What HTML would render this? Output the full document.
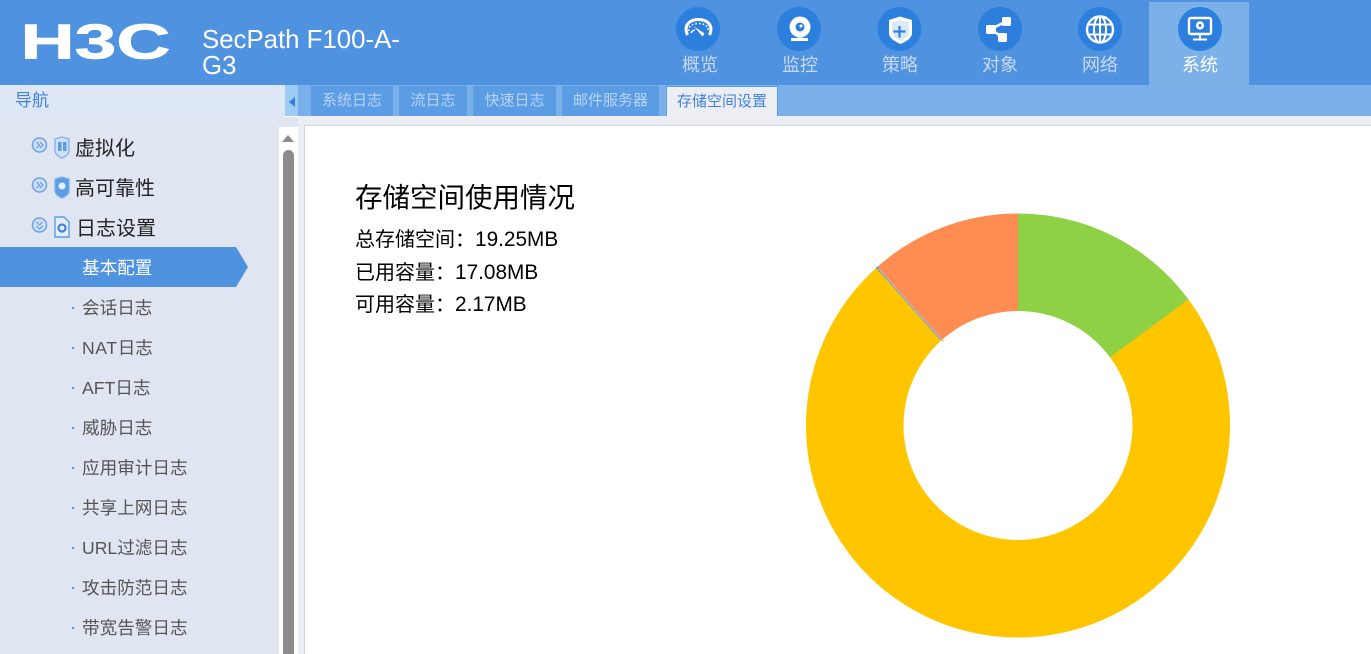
<!DOCTYPE html>
<html lang="zh-CN">
<head>
<meta charset="utf-8">
<title>存储空间设置</title>
<style>
html,body{margin:0;padding:0;width:1371px;height:654px;overflow:hidden;background:#fff;}
body{position:relative;font-family:"Liberation Sans","Noto Sans CJK SC",sans-serif;}
.a{position:absolute;white-space:nowrap;}
.bar{left:0;top:0;width:1371px;height:85px;background:#4f92e0;}
.sel{left:1149px;top:2px;width:100px;height:83px;background:#7bb0e9;}
.nl{top:53px;width:100px;text-align:center;font-size:18px;line-height:24px;color:#c9d9f3;}
.tab{top:86px;height:30px;background:#5b9de4;color:#b9d3f3;font-size:15px;line-height:30px;text-align:center;}
.sub{left:82px;font-size:17.6px;line-height:24px;color:#555;}
.dot{left:72px;width:2px;height:2px;background:#4f92e0;}
.top{font-size:20px;line-height:26px;color:#222;}
.info{left:355px;font-size:20px;line-height:26px;color:#000;}
.info span{font-size:20.800px;}
</style>
</head>
<body>
<div class="a bar"></div>
<svg class="a" style="left:0;top:0" width="200" height="85"><text x="20.500" y="58.500" font-family="Liberation Sans" font-weight="700" font-size="49" fill="#fff" stroke="#fff" stroke-width=".7" textLength="150" lengthAdjust="spacingAndGlyphs">H3C</text></svg>
<div class="a" style="left:202px;top:27px;font-size:25.800px;line-height:26px;color:#fff;white-space:normal;width:210px;">SecPath F100-A-G3</div>
<div class="a sel"></div>

<svg class="a" style="left:660px;top:0" width="600" height="60" fill="none">
  <g fill="#2d7fdd"><circle cx="38" cy="29" r="22"/><circle cx="139" cy="29" r="22"/><circle cx="239.500" cy="29" r="22"/><circle cx="340" cy="29" r="22"/><circle cx="440" cy="29" r="22"/><circle cx="540" cy="29" r="22"/></g>
  <!-- gauge -->
  <path d="M27.500 35C23 25 30 19.500 38.500 19.500S54 25 49.500 35" stroke="#fff" stroke-width="3"/>
  <path d="M29 31C28 26 33 23.500 38.500 23.500S49 26 48 31" stroke="#fff" stroke-width="1.600" stroke-dasharray="1.600 2"/>
  <path d="M34 26.500L44.500 33.500L42.500 36.500z" fill="#fff"/>
  <path d="M31 33c1-2 3-3 4-3" stroke="#fff" stroke-width="1.500"/>
  <!-- webcam -->
  <circle cx="140" cy="27" r="10.500" fill="#fff"/>
  <circle cx="140" cy="27" r="4.500" fill="#2d7fdd"/>
  <circle cx="141" cy="26" r="1.500" fill="#fff"/>
  <path d="M140 36v3" stroke="#fff" stroke-width="3"/>
  <rect x="131" y="38" width="17" height="3" fill="#fff"/>
  <!-- shield -->
  <path d="M229 20l11-3.500 12 3.500v13c0 5.500-7 9-11.500 11-4.500-2-11.500-5.500-11.500-11z" fill="#fff"/>
  <path d="M232 22.500l8.500-2.500 8.500 2.500v10c0 4-5.500 7-8.500 8.300-3-1.300-8.500-4.300-8.500-8.300z" fill="#dce9f9"/>
  <path d="M239.500 26v11.500M233.500 31.500h12" stroke="#2d7fdd" stroke-width="2.200"/>
  <!-- share -->
  <path d="M331 29l16-8M331 29l12 9" stroke="#fff" stroke-width="2.500"/>
  <rect x="326" y="25" width="10" height="9" rx="1.500" fill="#fff"/>
  <rect x="342" y="17" width="9" height="9" rx="1.500" fill="#fff"/>
  <rect x="338" y="33" width="9" height="9" rx="1.500" fill="#fff"/>
  <!-- globe -->
  <circle cx="440" cy="29.500" r="13" stroke="#fff" stroke-width="2.400"/>
  <ellipse cx="440" cy="29.500" rx="6" ry="13" stroke="#fff" stroke-width="2"/>
  <path d="M440 17v25M428 24.500h24M428 34.500h24" stroke="#fff" stroke-width="2"/>
  <!-- monitor -->
  <rect x="529" y="18" width="22" height="16" rx="1.500" stroke="#fff" stroke-width="2.400"/>
  <circle cx="540" cy="25.500" r="2.800" stroke="#fff" stroke-width="2.600"/>
  <path d="M540 35v4M533 39.500h14" stroke="#fff" stroke-width="2"/>
</svg>

<div class="a nl" style="left:650px">概览</div>
<div class="a nl" style="left:750px">监控</div>
<div class="a nl" style="left:850px">策略</div>
<div class="a nl" style="left:950px">对象</div>
<div class="a nl" style="left:1050px">网络</div>
<div class="a nl" style="left:1150px;color:#fff">系统</div>

<!-- sidebar -->
<div class="a" style="left:0;top:85px;width:285px;height:32px;background:#dee7f6;"></div>
<div class="a" style="left:0;top:117px;width:298px;height:537px;background:#dfe5f1;"></div>
<div class="a" style="left:15px;top:88px;font-size:17px;line-height:25px;color:#3f83dc;">导航</div>
<div class="a" style="left:279px;top:127px;width:19px;height:527px;background:#fff;"></div>
<div class="a" style="left:283px;top:150px;width:11px;height:504px;background:#8c8c8c;border-radius:6px 6px 0 0;"></div>
<div class="a" style="left:282px;top:135px;width:0;height:0;border-left:6.500px solid transparent;border-right:6.500px solid transparent;border-bottom:7px solid #8c8c8c;"></div>

<!-- collapse button and tab bar -->
<div class="a" style="left:298px;top:85px;width:1073px;height:31px;background:#7ab1ea;"></div>
<div class="a" style="left:285px;top:85px;width:13px;height:31px;background:#9ccbf5;"></div>
<div class="a" style="left:289px;top:97px;width:0;height:0;border-top:5px solid transparent;border-bottom:5px solid transparent;border-right:6px solid #2d7fdd;"></div>
<div class="a tab" style="left:311px;width:82px">系统日志</div>
<div class="a tab" style="left:399px;width:68px">流日志</div>
<div class="a tab" style="left:473px;width:83px">快速日志</div>
<div class="a tab" style="left:562px;width:97px">邮件服务器</div>
<div class="a tab" style="left:666px;top:86px;width:110px;height:30px;background:#edeef4;color:#3f83dc;border:1px solid #5b9de4;border-bottom:0;">存储空间设置</div>

<!-- content area -->
<div class="a" style="left:298px;top:116px;width:1073px;height:538px;background:#edeef4;"></div>
<div class="a" style="left:304px;top:125px;width:1067px;height:529px;background:#fff;border-left:1px solid #d0d4e8;border-top:1px solid #d0d4e8;box-sizing:border-box;"></div>

<!-- tree top level -->
<svg class="a" style="left:30px;top:130px" width="45" height="115" fill="none">
  <circle cx="9.500" cy="15" r="7" fill="#cfe0f6" stroke="#6fa3e6" stroke-width="1.500"/>
  <path d="M6.500 12l3 3-3 3M10 12l3 3-3 3" stroke="#6fa3e6" stroke-width="1.300"/>
  <circle cx="9.500" cy="55" r="7" fill="#cfe0f6" stroke="#6fa3e6" stroke-width="1.500"/>
  <path d="M6.500 52l3 3-3 3M10 52l3 3-3 3" stroke="#6fa3e6" stroke-width="1.300"/>
  <circle cx="9.500" cy="95" r="7" fill="#cfe0f6" stroke="#6fa3e6" stroke-width="1.500"/>
  <path d="M6.500 92l3 3 3-3M6.500 96l3 3 3-3" stroke="#6fa3e6" stroke-width="1.300"/>
  <path d="M25 9l7-2 7 2v12c0 3-4 6-7 7-3-1-7-4-7-7z" fill="#cfe0f6" stroke="#7fb0ea" stroke-width="1.300"/>
  <rect x="28" y="12" width="3.500" height="9" fill="#5b9de4"/><rect x="33" y="12" width="3.500" height="9" fill="#5b9de4"/>
  <path d="M25 49l7-2 7 2v12c0 3-4 6-7 7-3-1-7-4-7-7z" fill="#5b9de4" stroke="#7fb0ea" stroke-width="1.300"/>
  <circle cx="32" cy="56" r="3.500" fill="#e4effb"/>
  <path d="M25 87h9l5 5v15H25z" fill="#e4effb" stroke="#5b9de4" stroke-width="1.400"/>
  <circle cx="32" cy="98" r="3.500" stroke="#3f83dc" stroke-width="2.200"/>
</svg>
<div class="a top" style="left:75px;top:136px">虚拟化</div>
<div class="a top" style="left:75px;top:176px">高可靠性</div>
<div class="a top" style="left:76px;top:216px">日志设置</div>

<!-- selected row -->
<svg class="a" style="left:0;top:247px" width="250" height="40"><path d="M0 0H236L248 20 236 40H0z" fill="#4f92e0"/></svg>
<div class="a dot" style="top:267px"></div><div class="a sub" style="top:256px;color:#fff">基本配置</div>

<div class="a dot" style="top:307px"></div><div class="a sub" style="top:296px">会话日志</div>
<div class="a dot" style="top:347px"></div><div class="a sub" style="top:336px"><span style="letter-spacing:.6px">NAT</span>日志</div>
<div class="a dot" style="top:387px"></div><div class="a sub" style="top:376px">AFT日志</div>
<div class="a dot" style="top:427px"></div><div class="a sub" style="top:416px">威胁日志</div>
<div class="a dot" style="top:467px"></div><div class="a sub" style="top:456px">应用审计日志</div>
<div class="a dot" style="top:507px"></div><div class="a sub" style="top:496px">共享上网日志</div>
<div class="a dot" style="top:547px"></div><div class="a sub" style="top:536px">URL过滤日志</div>
<div class="a dot" style="top:587px"></div><div class="a sub" style="top:576px">攻击防范日志</div>
<div class="a dot" style="top:627px"></div><div class="a sub" style="top:616px">带宽告警日志</div>

<!-- info -->
<div class="a" style="left:355px;top:180px;font-size:27.500px;line-height:36px;color:#000;">存储空间使用情况</div>
<div class="a info" style="top:227px">总存储空间：<span>19.25MB</span></div>
<div class="a info" style="top:260px">已用容量：<span>17.08MB</span></div>
<div class="a info" style="top:292px">可用容量：<span>2.17MB</span></div>

<!-- donut -->
<svg class="a" style="left:800px;top:205px" width="440" height="449" fill="none">
  <g transform="translate(218 220.500) rotate(-90)" stroke-width="97.500">
    <circle r="163.250" pathLength="360" stroke="#ffc600" stroke-dasharray="265 95" transform="rotate(53.300)"/>
    <circle r="163.250" pathLength="360" stroke="#8fd144" stroke-dasharray="53.500 306.500"/>
    <circle r="163.250" pathLength="360" stroke="#ff8c50" stroke-dasharray="41.500 318.500" transform="rotate(-41.500)"/>
  </g>
  <line x1="141.400" y1="134.700" x2="76.600" y2="61.900" stroke="#3ab0ee" stroke-width="2"/>
  <line x1="143" y1="136.100" x2="78.200" y2="63.300" stroke="#f0708a" stroke-width="1"/>
  <line x1="143.700" y1="136.700" x2="78.900" y2="63.900" stroke="#ffb0a8" stroke-width=".8"/>
</svg>
</body>
</html>
